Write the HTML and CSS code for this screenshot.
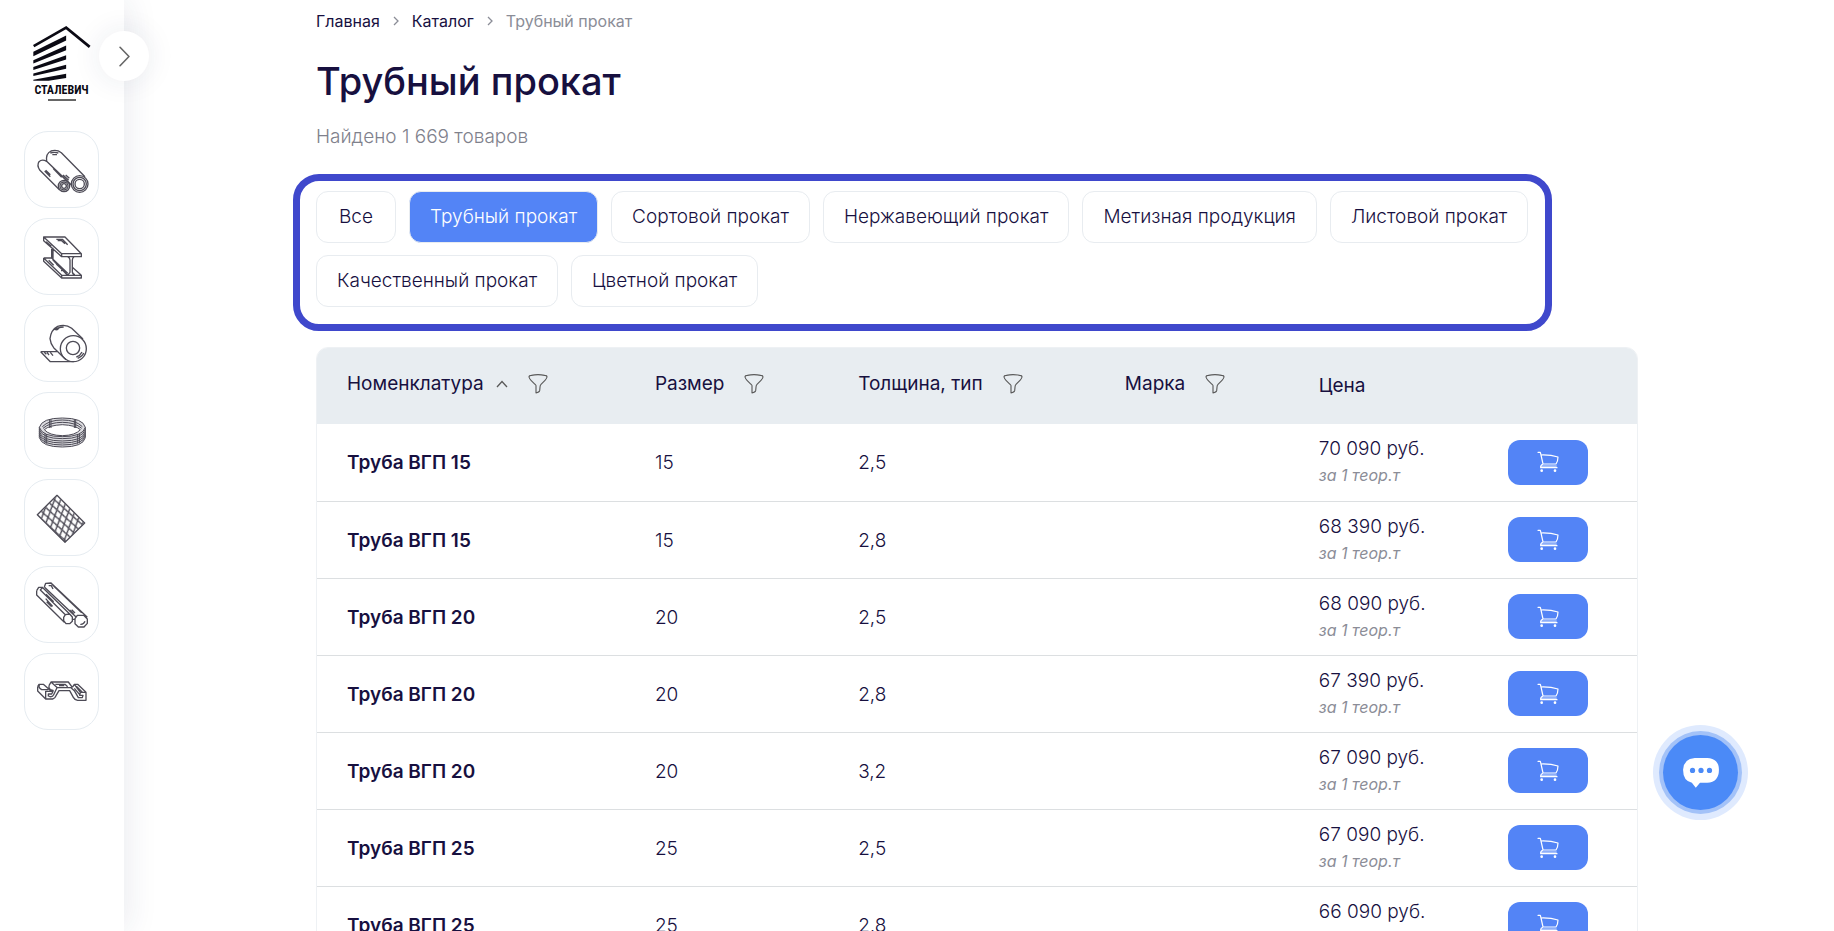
FILE: index.html
```html
<!DOCTYPE html>
<html lang="ru">
<head>
<meta charset="utf-8">
<title>Трубный прокат</title>
<link rel="stylesheet" href="styles.css">
</head>
<body>
<svg class="sprite" aria-hidden="true">
  <symbol id="funnel" viewBox="0 0 60 60">
    <path d="M3 9Q3 4 10 4Q30 0 50 4Q57 4 57 9Q56 14 51 19L39 31Q36 34 36 40L35 50Q34 55 24 57V35Q23 32 21 31L9 19Q4 14 3 9Z" fill="none" stroke="#5a5a5a" stroke-width="3.4" stroke-linejoin="round"/>
  </symbol>
  <symbol id="cart" viewBox="0 0 66 66">
    <g fill="none" stroke="#fff" stroke-width="3.6" stroke-linejoin="round" stroke-linecap="round">
      <path d="M3 4H10L12 12M12 12L18 39M12 12Q40 11 63 18Q63 30 57 39H18Q10 42 11 50H60"/>
    </g>
    <path d="M12 43H59V50H12Z" fill="#fff" fill-opacity=".5"/>
    <circle cx="14" cy="59" r="4" fill="#fff"/><circle cx="54" cy="59" r="4" fill="#fff"/>
  </symbol>
</svg>
<div class="app">
  <aside class="sidebar">
    <a class="logo" href="#">
      <svg viewBox="96 74 176 172" class="logo-mark" aria-hidden="true">
        <path d="M100 138L198 82L269 140" fill="none" stroke="#0b0a14" stroke-width="8"/>
        <path d="M99 155L198 106V121L99 168ZM99 180L198 136V150L99 190ZM99 201L198 165V178L99 210ZM99 220L198 194V206L99 228ZM99 239L198 221V234L145 242H99Z" fill="#0b0a14"/>
      </svg>
      <span class="logo-name">Сталевич</span>
      <span class="logo-line"></span>
    </a>
    <button class="toggle" aria-label="Развернуть меню">
      <svg viewBox="0 0 34 66" aria-hidden="true"><path d="M3 4L31 33L3 62" fill="none" stroke="#666" stroke-width="5" stroke-linecap="round" stroke-linejoin="round"/></svg>
    </button>
    <nav class="cats" aria-label="Разделы">
      <a class="cat" href="#" aria-label="Трубный прокат"><svg viewBox="104 427 162 162">
        <g><circle cx="238" cy="550" r="25"/><circle cx="238" cy="550" r="20"/><circle cx="238" cy="550" r="14"/><circle cx="191" cy="556" r="17"/><circle cx="191" cy="556" r="12"/><circle cx="191" cy="556" r="7"/>
        <path d="M139 482Q136 458 152 451Q170 446 183 456L254 528M214 554L139 482M139 482Q125 474 116 483Q109 494 118 508L178 568M139 482L205 546M133 511L150 528M136 509L150 522M150 457Q162 453 174 457M156 462H170M188 523L205 539M196 523L207 533M158 503L184 530"/></g></svg></a>
      <a class="cat" href="#" aria-label="Сортовой прокат"><svg viewBox="104 58 162 162">
        <g><path d="M130 79H194L243 129V138H184L130 90ZM130 79L184 129H243M184 129V138M154 108V142M202 138Q209 142 209 148V185Q206 192 200 192L158 148V111M221 138Q216 142 216 148V184Q218 192 224 192M130 142H154L202 188M130 142V152L184 202H243V194H184L130 142M184 194V202M216 170L243 194M168 86H186L202 102M172 90H184L194 99M137 93L153 107M145 149L160 164M168 160L190 181M184 172V182"/></g></svg></a>
      <a class="cat" href="#" aria-label="Листовой прокат"><svg viewBox="104 320 162 162">
        <g><ellipse cx="219" cy="415" rx="39" ry="39"/><circle cx="218" cy="413" r="20"/><path d="M248 386L214 354Q196 340 172 348Q152 358 149 385Q151 402 160 412L197 448M121 424H170M121 424L150 454H220M132 426L138 432M140 426L146 434M150 426L158 436M163 359Q172 351 190 350M168 360L176 354M232 444Q246 438 250 428M228 440Q240 436 245 425"/></g></svg></a>
      <a class="cat" href="#" aria-label="Проволока"><svg viewBox="104 580 162 162">
        <g class="dense"><path fill="#dcdce0" d="M117 650Q125 622 186 622Q248 622 255 650V681Q248 709 186 709Q125 709 117 681Z"/><path fill="#fff" d="M132 657Q146 644 186 642Q226 644 240 657Q226 674 186 675Q146 674 132 657Z"/><path d="M117 656Q125 684 186 684Q248 684 255 656M117 663Q125 691 186 691Q248 691 255 663M117 669Q125 697 186 697Q248 697 255 669M117 675Q125 703 186 703Q248 703 255 675M117 650Q125 678 186 678Q248 678 255 650M126 648Q146 628 186 628Q226 628 246 648M128 653Q148 635 186 635Q224 635 244 653M148 626V652M152 626V652M222 626V652M226 626V652M134 668V697M139 670V699M232 670V699M237 668V697"/></g></svg></a>
      <a class="cat" href="#" aria-label="Сетка"><svg viewBox="104 61 162 162">
        <defs><pattern id="mesh" width="21" height="31" patternUnits="userSpaceOnUse" patternTransform="rotate(-14)"><path d="M0 15.5L10.5 0L21 15.5L10.5 31Z" fill="none" stroke="#4d4b56" stroke-width="4"/></pattern></defs>
        <path d="M170 76L251 157L194 213L113 132Z" fill="url(#mesh)"/>
        <g><path d="M170 74L253 157L194 215L111 132Z"/></g></svg></a>
      <a class="cat" href="#" aria-label="Качественный прокат"><svg viewBox="104 322 162 162">
        <g><path d="M231 434H250L261 445V458L251 469H234L224 459V444ZM195 432L208 430L216 439V452L208 459H197L190 450V440ZM132 349L136 338L152 337L261 440M132 349L228 440M152 337L163 349L244 426M109 360L115 350H127L132 356L208 430M109 360V373L192 455M127 350L120 358L195 432M136 384L157 407M139 393L154 408M137 371L160 393M208 418L220 430M214 417L224 427M145 345H153L158 355M216 446H224M240 461Q250 462 254 452"/></g></svg></a>
      <a class="cat" href="#" aria-label="Профиль"><svg viewBox="104 583 162 162">
        <g><path d="M112 648L116 641H129L153 662M112 648V661L136 685M118 641Q112 650 124 657L144 657M136 685H157Q164 683 167 675L176 660H208L219 680Q223 688 232 689H257V665H240L238 674H248L246 681H234L222 660L212 651H170L160 672Q157 679 149 678L144 676V670H154L158 662H136V685ZM146 645L152 634H204L216 650M146 645Q144 650 150 657L160 660M152 634L172 652M165 641H194L202 648M176 645H192M216 650L222 641H232L257 665M222 641L240 665M222 653L240 674M228 647L246 665"/></g></svg></a>
    </nav>
  </aside>

  <main class="main">
    <nav class="crumbs" aria-label="Навигация">
      <a href="#">Главная</a>
      <svg viewBox="0 0 6 10" aria-hidden="true"><path d="M1 1L5 5L1 9" fill="none" stroke="#8b8d97" stroke-width="1.3"/></svg>
      <a href="#">Каталог</a>
      <svg viewBox="0 0 6 10" aria-hidden="true"><path d="M1 1L5 5L1 9" fill="none" stroke="#8b8d97" stroke-width="1.3"/></svg>
      <span>Трубный прокат</span>
    </nav>
    <h1>Трубный прокат</h1>
    <p class="found">Найдено 1 669 товаров</p>
    <div class="chips">
      <button class="chip">Все</button>
      <button class="chip active">Трубный прокат</button>
      <button class="chip">Сортовой прокат</button>
      <button class="chip">Нержавеющий прокат</button>
      <button class="chip">Метизная продукция</button>
      <button class="chip">Листовой прокат</button>
      <button class="chip">Качественный прокат</button>
      <button class="chip">Цветной прокат</button>
    </div>
    <div class="table-wrap">
    <table>
      <colgroup><col class="c-name"><col class="c-size"><col class="c-thick"><col class="c-mark"><col class="c-price"><col></colgroup>
      <thead>
        <tr>
          <th><div class="th">Номенклатура <svg class="sort" viewBox="0 0 12 8" aria-hidden="true"><path d="M1 7L6 1.5L11 7" fill="none" stroke="#5a5a5a" stroke-width="1.3"/></svg><button class="filter" aria-label="Фильтр"><svg><use href="#funnel"/></svg></button></div></th>
          <th><div class="th">Размер <button class="filter" aria-label="Фильтр"><svg><use href="#funnel"/></svg></button></div></th>
          <th><div class="th">Толщина, тип <button class="filter" aria-label="Фильтр"><svg><use href="#funnel"/></svg></button></div></th>
          <th><div class="th">Марка <button class="filter" aria-label="Фильтр"><svg><use href="#funnel"/></svg></button></div></th>
          <th>Цена</th>
          <th></th>
        </tr>
      </thead>
      <tbody>
        <tr><td>Труба ВГП 15</td><td>15</td><td>2,5</td><td></td><td>70 090 руб.<em>за 1 теор.т</em></td><td><button class="buy" aria-label="В корзину"><svg><use href="#cart"/></svg></button></td></tr>
        <tr><td>Труба ВГП 15</td><td>15</td><td>2,8</td><td></td><td>68 390 руб.<em>за 1 теор.т</em></td><td><button class="buy" aria-label="В корзину"><svg><use href="#cart"/></svg></button></td></tr>
        <tr><td>Труба ВГП 20</td><td>20</td><td>2,5</td><td></td><td>68 090 руб.<em>за 1 теор.т</em></td><td><button class="buy" aria-label="В корзину"><svg><use href="#cart"/></svg></button></td></tr>
        <tr><td>Труба ВГП 20</td><td>20</td><td>2,8</td><td></td><td>67 390 руб.<em>за 1 теор.т</em></td><td><button class="buy" aria-label="В корзину"><svg><use href="#cart"/></svg></button></td></tr>
        <tr><td>Труба ВГП 20</td><td>20</td><td>3,2</td><td></td><td>67 090 руб.<em>за 1 теор.т</em></td><td><button class="buy" aria-label="В корзину"><svg><use href="#cart"/></svg></button></td></tr>
        <tr><td>Труба ВГП 25</td><td>25</td><td>2,5</td><td></td><td>67 090 руб.<em>за 1 теор.т</em></td><td><button class="buy" aria-label="В корзину"><svg><use href="#cart"/></svg></button></td></tr>
        <tr><td>Труба ВГП 25</td><td>25</td><td>2,8</td><td></td><td>66 090 руб.<em>за 1 теор.т</em></td><td><button class="buy" aria-label="В корзину"><svg><use href="#cart"/></svg></button></td></tr>
      </tbody>
    </table>
    </div>
  </main>
</div>
<button class="chat" aria-label="Чат">
  <svg viewBox="0 0 110 92" aria-hidden="true"><path d="M36 0H74Q110 2 110 36Q110 74 74 76H52L39 91L27 76Q0 70 0 36Q2 2 36 0Z" fill="#fff"/><g fill="#4b8af7"><circle cx="29" cy="38" r="8"/><circle cx="55" cy="38" r="8"/><circle cx="81" cy="38" r="8"/></g></svg>
</button>
</body>
</html>
```
FILE: styles.css
```css
* { box-sizing: border-box; }
body {
  margin: 0;
  font: 300 19px/24px Inter, Roboto, sans-serif;
  color: #17103f;
  background: #fff;
}
a { color: inherit; text-decoration: none; }
button { font: inherit; color: inherit; cursor: pointer; padding: 0; }
.sprite { position: absolute; width: 0; height: 0; }
.app { display: flex; height: 100vh; overflow: hidden; }

.sidebar {
  position: relative;
  flex: none;
  width: 124px;
  padding: 25px 25px 0 24px;
  box-shadow: 4px 0 30px rgba(30, 45, 90, .09);
}
.logo {
  display: flex;
  flex-direction: column;
  align-items: center;
  height: 106px;
}
.logo-mark { width: 59px; height: 57px; }
.logo-name {
  font: bold 12px/14px "Liberation Sans Narrow", "Roboto Condensed", "Liberation Serif", serif;
  text-transform: uppercase;
  margin-top: 1px;
  color: #0b0a14;
}
.logo-line { width: 28px; height: 2px; margin-top: 2px; background: #666; }
.toggle {
  position: absolute;
  top: 31px;
  right: -25px;
  display: grid;
  place-items: center;
  width: 50px;
  height: 50px;
  border: 0;
  border-radius: 50%;
  background: #fff;
  box-shadow: 0 0 30px rgba(30, 45, 90, .09);
}
.toggle svg { width: 11px; height: 21px; }
.cats { display: flex; flex-direction: column; gap: 10px; }
.cat {
  display: grid;
  place-items: center;
  height: 77px;
  border: 1px solid #e6ecf1;
  border-radius: 24px;
}
.cat svg { width: 54px; height: 54px; }
.cat g { fill: none; stroke: #4d4b56; stroke-width: 4; stroke-linejoin: round; }
.cat .dense { stroke-width: 3; }

.main { flex: 1; min-width: 0; padding: 9px 196px 0 192px; }
.crumbs {
  display: flex;
  align-items: center;
  gap: 13px;
  font-size: 16px;
  font-weight: 400;
}
.crumbs svg { width: 6px; height: 10px; }
.crumbs span { color: #8b8d97; }
h1 { margin: 24px 0 0; font-size: 38px; line-height: 48px; font-weight: 500; }
.found { margin: 20px 0 25px; color: #7f818c; }
.chips {
  display: flex;
  flex-wrap: wrap;
  gap: 12px 13px;
  margin: 0 86px 16px -23px;
  padding: 10px 14px 17px 16px;
  border: 7px solid #3f48cc;
  border-radius: 26px;
}
.chip {
  min-width: 80px;
  height: 52px;
  padding: 0 20px;
  border: 1px solid #e8ecf0;
  border-radius: 12px;
  background: #fff;
}
.chip.active { background: #5384f6; color: #fff; }

.table-wrap {
  border: 1px solid #eef1f4;
  border-radius: 12px 12px 0 0;
  overflow: hidden;
}
table { width: 100%; table-layout: fixed; border-collapse: collapse; }
.c-name { width: 25.6%; }
.c-size { width: 15.4%; }
.c-thick { width: 20.2%; }
.c-mark { width: 14.7%; }
.c-price { width: 14.3%; }
th, td { padding: 0; text-align: left; }
th:first-child, td:first-child { padding-left: 30px; }
th { height: 76px; background: #e8edf1; font-weight: 400; }
.th { display: flex; align-items: center; padding-bottom: 4px; }
.sort { width: 12px; height: 8px; margin-left: 12px; }
.filter { display: grid; margin-left: 20px; border: 0; background: none; }
.filter svg { width: 20px; height: 20px; }
td { height: 77px; padding-top: 2px; border-bottom: 1px solid #dcdfe1; }
td:first-child { font-weight: 600; }
td:last-child { padding-top: 0; }
td em { display: block; font-size: 16px; line-height: 28px; font-weight: 400; color: #8b8d97; }
.buy {
  display: grid;
  place-items: center;
  width: 80px;
  height: 45px;
  border: 0;
  border-radius: 12px;
  background: #5384f6;
}
.buy svg { width: 22px; height: 22px; }

.chat {
  position: fixed;
  right: 96px;
  bottom: 121px;
  display: grid;
  place-items: center;
  width: 75px;
  height: 75px;
  border: 0;
  border-radius: 50%;
  background: #4b8af7;
  box-shadow: 0 0 0 4px #a3c2f8, 0 0 0 10px #dfeafe;
}
.chat svg { width: 36px; height: 30px; }
```
